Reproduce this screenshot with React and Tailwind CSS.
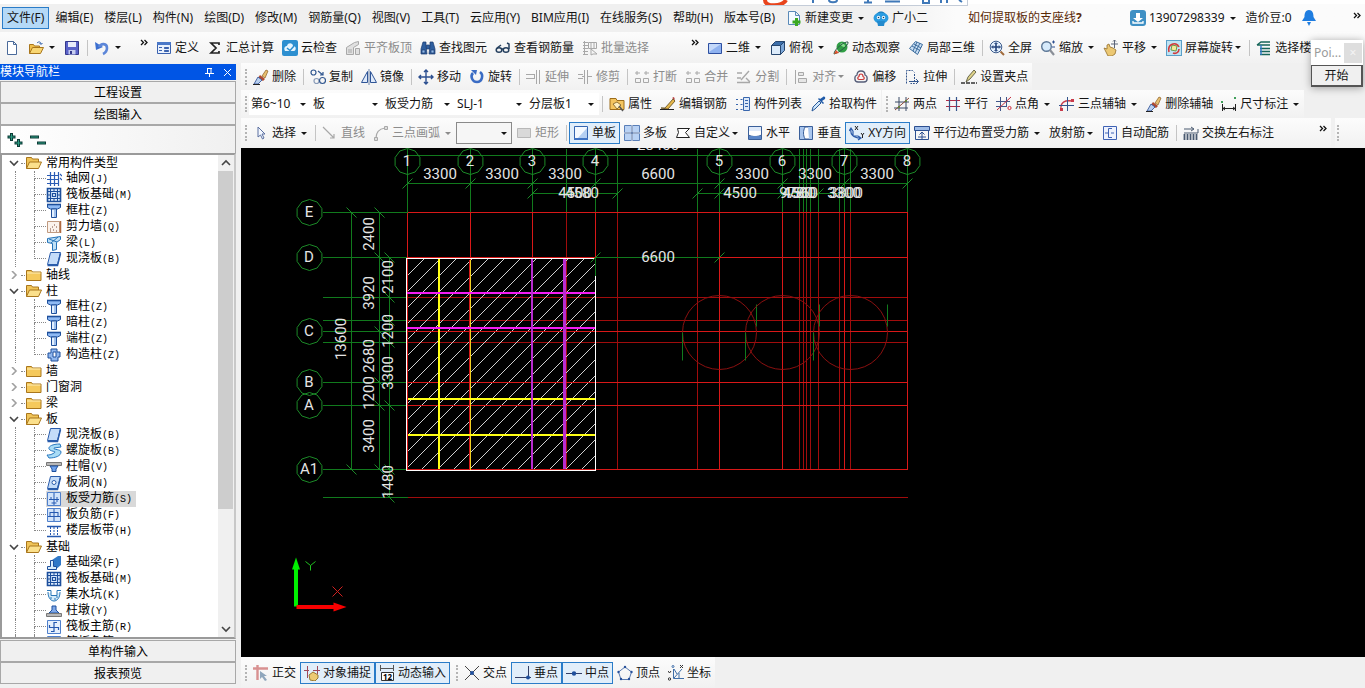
import React, { useState } from 'react'
import clsx from 'clsx'

const BLUE = '#2f5fa8'
const GREY = '#a8a8a8'

const star = (
  <g fill="none" stroke={GREY}>
    <path d="M1 4h5M10 4h5M3 2v4M12 2v4" />
    <path d="M1.5 9.5h5v4h-5zM9.5 9.5h5v4h-5z" />
  </g>
)

const brush = (
  <g>
    <path d="M9 7l4-6 2 1-3 7z" fill="#e8c070" stroke="#8a5a20" strokeWidth=".7" />
    <path d="M7 6l5 4-2 2-5-3z" fill="#b04a30" />
    <path d="M5 8l4 3-4 4H1z" fill="#b8d0f0" stroke="#2a4a90" strokeWidth=".8" />
    <path d="M0 15.5h7" stroke="#222" />
  </g>
)

const raft = (
  <g fill="none" stroke="#1d4f9c">
    <path d="M1.500 1.500h13v13h-13z" fill="#dcebfd" strokeWidth="1.600" />
    <path d="M4.500 4.500h7v7h-7zM6.500 6.500h3v3h-3z" strokeWidth="1.200" />
    <path d="M2 4.500h2M2 8h2M2 11.500h2M12 4.500h2M12 8h2M12 11.500h2M4.500 2v2M8 2v2M11.500 2v2M4.500 12v2M8 12v2M11.500 12v2" />
  </g>
)

const pillar = (
  <g stroke="#1d4f9c">
    <path d="M1.500 1.500h13v3l-3 1.500h-7l-3-1.500z" fill="#8fbaf4" />
    <path d="M1 1.500h14" strokeWidth="1.600" />
    <path d="M5.500 6h5v8.500h-5z" fill="#e3f0ff" />
    <path d="M9 7v7" stroke="#5d92dc" />
  </g>
)

const slab = (
  <g stroke="#2a5cab">
    <path d="M4.500 1.500h10l-3 12h-10z" fill="#c4dcf9" />
    <path d="M1.500 14.500h10l3-12" fill="none" strokeWidth="1.500" />
  </g>
)

const bar = (
  <g fill="none" stroke="#2458b0">
    <path d="M1.500 1.500h13v13h-13z" fill="#d2e4fb" stroke="#4f80cc" />
    <path d="M8 2v12M3 8.500h10M5 6v3M11 6v5M5.500 12h5" />
  </g>
)

const barTop = (
  <g fill="none" stroke="#2458b0">
    <path d="M1.500 1.500h13v13h-13z" fill="#d2e4fb" stroke="#4f80cc" />
    <path d="M8 2v12M4 5.500h8M4 5v5M12 5v5M2 9.500h12" />
  </g>
)

const barMain = (
  <g fill="none" stroke="#2458b0">
    <path d="M1.500 1.500h13v13h-13z" fill="#e6f0fd" stroke="#4f80cc" />
    <path d="M8 3v10M3 8.500h10M8 3.500h3M8 12.500H5M3.500 6v3M12.500 8v3" strokeWidth="1.200" />
  </g>
)

const ICONS = {
  file: <path d="M3.500 1.500h6l3 3v10h-9zM9.500 1.500v3h3" fill="#fff" stroke="#4a6a9a" />,
  open: (
    <g stroke="#a9761c">
      <path d="M1.500 13.500v-9h4l1 1.500h5v2" fill="#efbf4c" />
      <path d="M1.500 13.500l3-6h11l-3 6z" fill="#f8d673" />
      <path d="M9 3c2-2 4-1 4 1M11.500 3l1.500 1.500L14.500 3" fill="none" stroke={BLUE} />
    </g>
  ),
  save: (
    <g>
      <path d="M1.500 1.500h13v13h-13z" fill="#5a62c8" stroke="#34388c" />
      <path d="M4 2h8v5H4z" fill="#e8ebfa" />
      <path d="M4.500 10h7v4.500h-7z" fill="#c6cdf0" />
      <path d="M6 11h2v3H6z" fill="#34388c" />
    </g>
  ),
  undo: (
    <g>
      <path d="M1 2l1 8 7-3z" fill="#3b6fd0" />
      <path d="M5 7C7 3 13 3 13 8c0 3-2 5-4 6" fill="none" stroke="#5c86d8" strokeWidth="2.600" />
    </g>
  ),
  define: (
    <g>
      <path d="M1.500 2.500h13v11h-13z" fill="#e9f1fd" stroke="#3a62b0" />
      <path d="M1 2h14v3H1z" fill="#4a78c8" />
      <path d="M3 7.500h3M3 10.500h3M8.500 7.500h4v1h-4zM8.500 10.500h4v1h-4z" stroke="#3a62b0" />
    </g>
  ),
  sum: <path d="M12 5V3H4l5 5-5 5h8v-2" fill="none" stroke="#222" strokeWidth="1.700" />,
  cloudCheck: (
    <g>
      <rect width="16" height="16" rx="2" fill="#2d8fd0" />
      <path d="M3 11c-2-4 1-5 2-5 1-4 6-3 6 0 4 0 3 5 1 5z" fill="#e6f5ff" />
      <path d="M5 8l3 2.500L12 6" stroke="#2d8fd0" strokeWidth="1.500" fill="none" />
    </g>
  ),
  slabTop: (
    <g fill="#e0e0e0" stroke={GREY}>
      <path d="M1.500 7.500l8-5 4-1v3l-5 3v7h-7z" />
      <path d="M3 10h4M3 12h4M10.500 8.500h4v6h-4z" />
    </g>
  ),
  binocular: (
    <g fill="#2f5f9f" stroke="#1c3c70" strokeWidth=".7">
      <path d="M3 2h3v4l1 8H1V9zM10 2h3l2 7v5H9l1-8z" />
      <path d="M6.500 5h3v4h-3z" />
      <path d="M2 10h3v3H2zM11 10h3v3h-3z" fill="#8fb8e8" />
    </g>
  ),
  glasses: (
    <g fill="none" stroke="#26405f" strokeWidth="1.500">
      <ellipse cx="4" cy="10" rx="2.800" ry="2.300" />
      <ellipse cx="11" cy="10" rx="2.800" ry="2.300" />
      <path d="M6.500 9h2M2 8l4-3M14 9V4l-2-1" />
    </g>
  ),
  batch: <path d="M1 2.500h5M1 5.500h5M1 8.500h5M1 11.500h5M1 14.500h5M2.500 1v14M6.500 2.500h8v6h-8zM9 3v5M12 3v5M9 9l6 5h-4l-2 1z" fill="none" stroke={GREY} />,
  plane: (
    <g>
      <path d="M1.500 3.500h13v10h-13z" fill="#8fb2f0" stroke="#2d4fa0" />
      <path d="M2 4h12L2 12z" fill="#c3d8fa" />
    </g>
  ),
  cube: (
    <g stroke="#27466e">
      <path d="M1.500 5.500l4-4h9l-4 4z" fill="#3b6eaa" />
      <path d="M1.500 5.500h9v9h-9z" fill="#dcebfa" />
      <path d="M10.500 5.500l4-4v9l-4 4z" fill="#7ba6d8" />
    </g>
  ),
  orbit: (
    <g>
      <circle cx="9" cy="7" r="5.500" fill="#2f9e44" />
      <path d="M7 4c2-2 5 0 5 2s-3 1-5-2z" fill="#8be08f" />
      <path d="M1 14C1 9 12 1 15 2c1 3-9 11-14 12z" fill="none" stroke="#2b5a48" />
      <path d="M1 14l5-1-3-3z" fill="#e0522c" />
    </g>
  ),
  partial: (
    <g fill="#c8def4" stroke="#3d6d9d">
      <path d="M1.500 8.500l6-7 7 3-5 10z" />
      <path d="M4 6l7 4M9 2L5 11M12 3L7 13M6 4l7 4" fill="none" />
    </g>
  ),
  fit: (
    <g fill="none" stroke="#3d5c8c">
      <circle cx="7" cy="7" r="5.800" fill="#e6f2ff" />
      <path d="M7 3v8M3 7h8" stroke="#23427a" strokeWidth="1.600" />
      <path d="M5.500 4L7 2.500 8.500 4M5.500 10L7 11.500 8.500 10M4 5.500L2.500 7 4 8.500M10 5.500L11.500 7 10 8.500" stroke="#23427a" />
      <path d="M11.500 11.500l3.500 3.500" stroke="#a06a3a" strokeWidth="2" />
    </g>
  ),
  zoom: (
    <g fill="none" stroke="#5c7796">
      <circle cx="6.500" cy="6.500" r="4.800" fill="#d6eafb" strokeWidth="1.400" />
      <path d="M10 10l4 5" strokeWidth="2.200" stroke="#8a8f98" />
      <path d="M12 2h3M13.500 .5v3M12 7h3" stroke="#2c4f90" />
    </g>
  ),
  pan: (
    <g>
      <path d="M1 8l3 1V5l2-1 1 3 3 1 3 2-1 4-3 2H5z" fill="#ecc873" stroke="#94702c" strokeWidth=".8" />
      <path d="M11.500 0v8M8 4h7M10 1.500L11.500 0 13 1.500" fill="none" stroke="#5a6478" />
    </g>
  ),
  screenRotate: (
    <g>
      <rect x=".5" y=".5" width="15" height="15" fill="#bfe3f4" stroke="#5aa0c8" />
      <path d="M6 5l5 1-1 5-5-1z" fill="#f6e89a" stroke="#6a9a4a" />
      <path d="M3 12c-2-8 7-11 10-5M13 9c0 4-4 5-6 4" fill="none" stroke="#d23a3a" strokeWidth="1.600" />
    </g>
  ),
  floors: (
    <g fill="none" stroke="#17665a" strokeWidth="1.400">
      <path d="M1 5l4-3h9M1 5h13M4 8.500h10M4 11.500h10M4 14.500h10" />
      <path d="M5 5v10" stroke="#2f78c8" />
    </g>
  ),
  brush,
  copy: (
    <g fill="none" stroke="#30568f" strokeWidth="1.200">
      <circle cx="3.500" cy="3.500" r="2.500" />
      <circle cx="6.500" cy="12" r="2.500" stroke="#8a9cb8" />
      <circle cx="12.500" cy="11.500" r="3" />
      <path d="M8 2l5 4M13 3v3h-3" />
    </g>
  ),
  mirror: (
    <g fill="#dfeafa" stroke="#2f5596">
      <path d="M6.500 2.500v11h-6zM9.500 2.500v11h6z" />
      <path d="M8 0v16" stroke="#6f86ac" />
    </g>
  ),
  move: <path d="M8 1v14M1 8h14M6 3l2-2 2 2M6 13l2 2 2-2M3 6L1 8l2 2M13 6l2 2-2 2" fill="none" stroke="#2c4f90" strokeWidth="1.400" />,
  rotate: (
    <g fill="none" stroke="#3a6cc4" strokeWidth="2.600">
      <path d="M4 4C1 7 3 13 8 13s7-7 3-10" />
      <path d="M2 1l6 0-1 5z" fill="#3a6cc4" stroke="none" />
    </g>
  ),
  extend: <path d="M0 5.500h8M0 9.500h8M10.500 1v14M13.500 1v14M8.500 5v5" fill="none" stroke={GREY} />,
  trim: <path d="M1 5.500h5M1 9.500h5M10 7.500h5M7.500 1v14M10.500 1v14M5 7.500h3" fill="none" stroke={GREY} />,
  brk: star,
  merge: star,
  split: <path d="M1 4h5M1 13.500h13M1 9h4M13 2l-8 9M10 9l4 4" fill="none" stroke={GREY} strokeWidth="1.400" />,
  align: <path d="M2.500 1v14M5.500 3.500h5v3h-5zM5.500 9.500h8v4h-8z" fill="#e6e6e6" stroke={GREY} />,
  offset: (
    <g fill="none">
      <path d="M8 2c3 0 4 2 4 4 3 1 3 7-1 7H5c-4 0-4-6-1-7 0-2 1-4 4-4z" stroke="#555d78" strokeWidth="1.300" />
      <path d="M8 5c1.500 0 2 1 2 2.500 2 1 1.500 3-.5 3h-3c-2 0-2.500-2-.5-3C6 6 6.500 5 8 5z" stroke="#c93a3a" strokeWidth="1.200" />
    </g>
  ),
  stretch: (
    <g fill="none" stroke="#33558c">
      <path d="M2.500 14.500v-13h6l2 2M10.500 5v9.500h-4" strokeDasharray="2 1" />
      <path d="M5 12.500h9M12 10l2.500 2.500L12 15" />
    </g>
  ),
  grip: (
    <g>
      <path d="M0 14h16" stroke="#333" strokeWidth="1.500" strokeDasharray="4 1" />
      <path d="M5 13l2-5 6-7 2 2-6 7z" fill="#ded28a" stroke="#4a4a30" strokeWidth=".8" />
    </g>
  ),
  props: (
    <g>
      <path d="M1 2.500h6l1 2h7v9H1z" fill="#f4c560" stroke="#9c6c1a" />
      <path d="M4 8l4-2 4 3-4 4z" fill="#fff0c0" stroke="#7a5a20" strokeWidth=".8" />
      <path d="M10 10l4 5" stroke="#555" strokeWidth="1.500" />
    </g>
  ),
  editBar: (
    <g>
      <path d="M1 12h4l8-9 2 2-7 8z" fill="#e6b84c" stroke="#5c4618" strokeWidth=".8" />
      <path d="M0 13.500h14" stroke="#222" />
      <path d="M12 2l2-1 1 3z" fill="#b03030" />
    </g>
  ),
  list: (
    <g fill="none" stroke="#3866ad">
      <path d="M1 3.500h3M1 8.500h3M1 13.500h3M5.500 3.500h2M5.500 8.500h2M5.500 13.500h2" strokeDasharray="2 1" />
      <path d="M8.500 1.500h6v13h-6z" fill="#dce8f8" />
      <path d="M10 4.500h3M10 7.500h3M10 10.500h3" />
    </g>
  ),
  picker: (
    <g>
      <path d="M2 15l1-4 6-6 2 2-6 6z" fill="#cfe6fa" stroke="#2a5a9a" />
      <path d="M8 3l5 5 1-1-2-2 3-2c1-2-1-3-2-2l-3 2-1-1z" fill="#1f5aa8" />
    </g>
  ),
  twoPt: (
    <g fill="none" stroke="#333">
      <path d="M1 6h14M0 12h14M5 1v14M12 1v14" stroke="#3a4a66" />
      <path d="M1 14L15 2" stroke="#8a4a3a" />
      <circle cx="5" cy="11" r="1" fill="#5a8a2a" stroke="none" />
      <circle cx="12" cy="5" r="1" fill="#5a8a2a" stroke="none" />
    </g>
  ),
  parallel: (
    <g fill="none">
      <path d="M1 4.500h14M1 10.500h14" stroke="#b02c48" strokeWidth="1.200" />
      <path d="M4.500 1v14M11.500 1v14" stroke="#35558c" strokeWidth="1.200" />
    </g>
  ),
  angle: (
    <g fill="none">
      <path d="M0 5.500h14M0 10.500h11M4.500 1v14M10.500 1v9" stroke="#41588a" />
      <path d="M1 14L15 1" stroke="#c42c3c" />
      <circle cx="13.500" cy="12" r="1.600" stroke="#d02c3c" />
    </g>
  ),
  threePt: (
    <g fill="none">
      <path d="M2 14C1 6 6 4 13 5" stroke="#c93a4a" strokeWidth="1.300" />
      <path d="M8.500 1v14M0 9.500h15" stroke="#35558c" />
      <path d="M1 12h3v3H1zM12 3h3v3h-3z" fill="#c93a4a" />
    </g>
  ),
  dim: (
    <g fill="none">
      <path d="M1.500 8v7M14.500 8v7M2 12.500h12M4 11l-2 1.500L4 14M12 11l2 1.500-2 1.500" stroke="#222" />
      <path d="M0 5h2v2H0zM13 1h2v2h-2z" fill="#3f9f5a" />
    </g>
  ),
  cursor: <path d="M5 2v10l2.500-2 2 4 1.500-1-2-4h3z" fill="#f4f8ff" stroke="#5a6fa0" />,
  line: <path d="M1 2l11 11M12 9v4H8" fill="none" stroke={GREY} strokeWidth="1.200" />,
  arc: (
    <g fill="none" stroke={GREY}>
      <path d="M3 13C3 7 6 4 12 3" strokeWidth="1.200" />
      <path d="M1.500 12.500h3v3h-3zM11.500 1.500h3v3h-3z" fill="#ddd" />
    </g>
  ),
  rect: <path d="M1.500 3.500h13v9h-13z" fill="#d9d9d9" stroke="#b8b8b8" />,
  single: (
    <g>
      <path d="M1.500 1.500h13v13h-13z" fill="#f4f9ff" stroke="#3565b0" />
      <path d="M14 3v11H4z" fill="#b4cff2" />
      <path d="M1 13h14v2H1z" fill="#3f73c4" />
    </g>
  ),
  multi: (
    <g>
      <path d="M.5.5h15v15H.5z" fill="#b9d2f4" stroke="#5a7fb8" />
      <path d="M8 0v16M0 8h16" stroke="#fff" strokeWidth="2" />
      <path d="M8 0v16M0 8h16" stroke="#3a5f9a" />
    </g>
  ),
  custom: <path d="M1.500 12.500l2-5-1-4h12l-4 4 4 5z" fill="#fff" stroke="#222" />,
  horizontal: (
    <g>
      <path d="M1.500 1.500h13v13h-13z" fill="#dfeafa" stroke="#3a5f9a" />
      <path d="M1.500 6v4c4 2 9 2 13 0V6" fill="#fff" stroke="#3a5f9a" />
      <path d="M2 11h12v3H2z" fill="#5a86c8" />
    </g>
  ),
  vertical: (
    <g>
      <path d="M1.500 1.500h13v13h-13z" fill="#a9c6ee" stroke="#3a5f9a" />
      <path d="M10 2H7c-2 4-2 8 0 12h4" fill="#fff" stroke="#3a5f9a" />
    </g>
  ),
  xy: (
    <g fill="none" stroke="#2c5aa8" strokeWidth="1.200">
      <path d="M2 4c-1 5 2 9 9 9M4 6v5h5M9 11l3 2-3 2M0 6l2-3 2 3" />
      <path d="M6 1l3 4M9 1L6 5M12 8l1.500 2L15 8M13.500 10v3" stroke="#222" strokeWidth="1" />
    </g>
  ),
  edgeBar: (
    <g fill="none" stroke="#2c4f90">
      <path d="M.5 1.500h15v4H.5z" fill="#9ebce8" />
      <path d="M1.500 6v8.500h13V6M8 14V7M5.500 9.500L8 7l2.500 2.500M4 12h8" />
    </g>
  ),
  auto: (
    <g fill="none" stroke="#3f62b4">
      <path d="M1.500 1.500h13v13h-13z" fill="#eef2fd" />
      <path d="M10 3.500H6.500v9H10M3 8h3.500M9 8h3" />
    </g>
  ),
  swap: (
    <g fill="none" stroke="#4a5a70">
      <path d="M1 4h9M8 2l3 2-3 2M15 4v4H1" />
      <path d="M1.500 9v6M4.500 9v6M7.500 9v6M10.500 9v6M13.500 9v6" strokeWidth="1.800" />
    </g>
  ),
  ortho: (
    <g fill="none">
      <path d="M0 3.500h15M4.500 0v15" stroke="#d89090" strokeWidth="2.400" />
      <path d="M7 6v8l2-2 3 4 2-1-3-4h3z" fill="#8fa6bc" />
    </g>
  ),
  snap: (
    <g fill="none">
      <path d="M0 5.500h5M3.500 1v12M13.500 1v8M9 5.500h7" stroke="#a04858" />
      <path d="M6 15l-1-5 4-3 5 3v3l-3 3z" fill="#ecca72" stroke="#9a7a30" />
    </g>
  ),
  dyn: (
    <g>
      <path d="M1.500 0v6M14.500 0v6M2 3.500h12" stroke="#555" />
      <path d="M2.500 7.500h12v8h-12z" fill="#fff" stroke="#333" />
      <text x="4" y="14.500" fontSize="8" fontWeight="bold">12</text>
    </g>
  ),
  cross: (
    <g>
      <path d="M1 1l14 14M15 1L1 15" stroke="#444" />
      <circle cx="8" cy="8" r="2" fill="#1f4f9c" />
    </g>
  ),
  perp: (
    <g>
      <path d="M13.500 1v11M0 12.500h16" stroke="#333f66" />
      <circle cx="13" cy="12.500" r="2" fill="#1f4f9c" />
    </g>
  ),
  mid: (
    <g>
      <path d="M0 8.500h16" stroke="#333f66" />
      <circle cx="8" cy="8.500" r="2.200" fill="#1f4f9c" />
    </g>
  ),
  vertex: (
    <g fill="#27509a">
      <path d="M8 2l6.500 5-2.500 7.500H4L1.500 7z" fill="none" stroke="#5a7ab0" />
      <circle cx="8" cy="2" r="1.200" /><circle cx="14.500" cy="7" r="1.200" /><circle cx="12" cy="14" r="1.200" /><circle cx="4" cy="14" r="1.200" /><circle cx="1.500" cy="7" r="1.200" />
    </g>
  ),
  coord: (
    <g fill="none" stroke="#3f6ea8">
      <path d="M5.500 4v9.500H16M6 13l8-9M6 4l3 5M11 8v5" />
      <path d="M0 6l1.500 2L3 6M12 0l3 3M15 0l-3 3" stroke="#333" />
      <circle cx="5" cy="1.500" r="1" /><circle cx="1.500" cy="14" r="1.200" stroke="#333" />
    </g>
  ),
  change: (
    <g>
      <path d="M2.500 1.500h7l4 4v9h-11zM9.500 1.500v4h4" fill="#f4faff" stroke="#5a8ab8" />
      <path d="M10.500 8v8M6.500 12h8" stroke="#3aa820" strokeWidth="3" />
    </g>
  ),
  robot: (
    <g>
      <path d="M3 6C3 0 13 0 13 6z" fill="#1679b8" />
      <ellipse cx="8" cy="8" rx="7.500" ry="5.500" fill="#2a9be0" />
      <path d="M4 11h8l-1 5H5z" fill="#2389cc" />
      <circle cx="5.500" cy="7.500" r="1.700" fill="#fff" /><circle cx="10.500" cy="7.500" r="1.700" fill="#fff" />
      <circle cx="5.500" cy="7.500" r=".8" fill="#0d3f66" /><circle cx="10.500" cy="7.500" r=".8" fill="#0d3f66" />
    </g>
  ),
  user: (
    <g>
      <rect width="16" height="16" rx="3" fill="#3f90c4" />
      <path d="M6 3h4v5h3l-5 4-5-4h3z" fill="#fff" />
      <path d="M3 11v2h10v-2" fill="none" stroke="#fff" strokeWidth="1.300" />
    </g>
  ),
  bell: <path d="M8 0c4 0 4.500 4 4.500 7l2.500 4H1l2.500-4C3.500 4 4 0 8 0zM6 12h4l-2 4z" fill="#1f7de0" />,
  folder: (
    <g stroke="#a9761c">
      <path d="M.5 3.500h5l1 1.500h8.500v8.500H.5z" fill="#f5c95c" />
      <path d="M1 6h13.500" stroke="#fdeeb8" />
    </g>
  ),
  folderOpen: (
    <g stroke="#a9761c">
      <path d="M.5 13.500v-11h5l1 1.500h6v3" fill="#f0c458" />
      <path d="M.5 13.500l3-6.500h12l-3 6.500z" fill="#fbe08c" />
    </g>
  ),
  axisNet: <path d="M1 4.500h12M1 8.500h12M1 12.500h12M4.500 1v14M8.500 1v14M12.500 1v14M14 3l2 2M14 7l2 2" fill="none" stroke="#2b5cb4" strokeWidth="1.200" />,
  raft,
  pillar,
  wall: (
    <g>
      <path d="M1.500 2.500h12v11h-12z" fill="#fbf3ec" stroke="#c09a80" />
      <path d="M4 10h1M7 11h1M10 8h1M4 12h1M8 6h1M10 12h1M6 8h1" stroke="#7a4a3a" />
      <path d="M14.500 2v12" stroke="#b06a40" strokeWidth="1.500" />
    </g>
  ),
  beam: (
    <g stroke="#2372b8">
      <path d="M1.500 3.500l13-2v3l-4 3v7l-4 1v-7l-5-1z" fill="#bfe0f6" />
      <path d="M3 4l8 3M12 2L5 8" />
    </g>
  ),
  slab,
  tie: (
    <g stroke="#1d4f9c">
      <path d="M5 2h6v3h3v5h-2v4H5v-3H2V6h3z" fill="#8fb6ee" />
      <path d="M7 5h3v5H7z" fill="#fff" />
    </g>
  ),
  spiral: <path d="M14 1C4 1 1 5 4 7s7 1 4 3-5 2-7 2l2 3c6 0 12-2 12-6 0-3-8-2-7-4l7-1z" fill="#a8dcf6" stroke="#2878c0" />,
  cap: (
    <g>
      <path d="M.5 3.500h15v3H.5z" fill="#b8b8b8" stroke="#777" />
      <path d="M4 7h8l-2 3v2.500H6V10z" fill="#6fa2ec" stroke="#1d4f9c" />
    </g>
  ),
  hole: (
    <g>
      {slab}
      <circle cx="8" cy="7.500" r="2" fill="#fff" stroke="#2a5cab" />
    </g>
  ),
  bar,
  barTop,
  barMain,
  strip: (
    <g fill="none" stroke="#2458b0">
      <path d="M1 3.500h14M1 13.500h14" strokeWidth="1.400" />
      <path d="M4.500 4v9M11.500 4v9M8 4v9" strokeDasharray="2 1" />
    </g>
  ),
  footBeam: (
    <g>
      <path d="M6 5l6-4h3v9l-6 5z" fill="#2f78c8" />
      <path d="M1.500 14.500v-3h3v-6h3v6h3v3z" fill="#d8ecfc" stroke="#1d4f9c" />
    </g>
  ),
  pit: (
    <g fill="none" stroke="#2b78b8">
      <path d="M2 6c0 11 12 11 12 0h-3v3H5V6z" fill="#d4ebfa" stroke="none" />
      <path d="M1 3.500h4v5h6v-5h4M2 5c0 12 12 12 12 0M4 11h2M8 12h2M10 10h2" />
    </g>
  ),
  pier: (
    <g>
      <path d="M6 3h4v4l3 3H3l3-3z" fill="#7fa8e8" stroke="#1d4f9c" />
      <path d="M.5 10.500h15v3H.5z" fill="#b8b8b8" stroke="#777" />
    </g>
  )
}

function Icon({ name }) {
  return (
    <svg className="h-4 w-4 shrink-0" viewBox="0 0 16 16" aria-hidden="true">
      {ICONS[name]}
    </svg>
  )
}

function Arrow({ tight }) {
  return (
    <svg className={clsx('h-[5px] w-[9px] shrink-0', tight && '-ml-[3px]')} viewBox="0 0 9 5" fill="currentColor" aria-hidden="true">
      <path d="M2 1h6L5 4z" />
    </svg>
  )
}

function Tool({ icon, label, title, arrow, tight, on, off }) {
  return (
    <button
      type="button"
      disabled={off}
      title={title}
      className={clsx(
        'flex h-[22px] shrink-0 items-center gap-[3px] px-1 whitespace-nowrap',
        on && 'bg-[#e1eefa] ring-1 ring-[#2a7cc8] ring-inset',
        off ? 'text-[#8c8c8c]' : 'text-[#151515]'
      )}
    >
      {icon && <Icon name={icon} />}
      {label && <span>{label}</span>}
      {(arrow || tight) && <Arrow tight={tight} />}
    </button>
  )
}

function Sep() {
  return <span className="mr-[2px] ml-[3px] h-4 w-px shrink-0 bg-[#c4c4c4]" />
}

function Grip() {
  return <span className="mx-[2px] h-4 shrink-0 border-l-2 border-dotted border-[#b4b4b4]" />
}

function More() {
  return (
    <button type="button" aria-label="更多" className="flex h-4 items-center px-1">
      <svg className="h-[7px] w-2" viewBox="0 0 8 7" fill="none" stroke="#111" strokeWidth="1.300">
        <path d="M1 1l2.500 2.500L1 6M4.500 1L7 3.500 4.500 6" />
      </svg>
    </button>
  )
}

function Bar({ className, children }) {
  return <div className={clsx('flex items-center bg-linear-to-b from-[#fcfcfc] to-[#f1f1f1]', className)}>{children}</div>
}

// items: object = tool, '|' = separator
function Tools({ items }) {
  return items.map((it, i) => (it === '|' ? <Sep key={i} /> : <Tool key={i} {...it} />))
}

function Combo({ label, value, small, framed }) {
  return (
    <div className={clsx('relative shrink-0', small ? 'w-[62px]' : framed ? 'w-14' : 'w-[72px]')}>
      <select
        aria-label={label}
        defaultValue={value}
        className={clsx('block h-[22px] w-full appearance-none pr-5 pl-[2px]', framed ? 'border border-[#8a8a8a] bg-[#f6f6f6]' : 'bg-white')}
      >
        <option>{value}</option>
      </select>
      <span className="pointer-events-none absolute inset-y-0 right-1 flex items-center">
        <Arrow />
      </span>
    </div>
  )
}

const MENU = ['文件(F)', '编辑(E)', '楼层(L)', '构件(N)', '绘图(D)', '修改(M)', '钢筋量(Q)', '视图(V)', '工具(T)', '云应用(Y)', 'BIM应用(I)', '在线服务(S)', '帮助(H)', '版本号(B)']

const QUICK = [
  { icon: 'define', label: '定义' },
  { icon: 'sum', label: '汇总计算' },
  { icon: 'cloudCheck', label: '云检查' },
  { icon: 'slabTop', label: '平齐板顶', off: true },
  { icon: 'binocular', label: '查找图元' },
  { icon: 'glasses', label: '查看钢筋量' },
  { icon: 'batch', label: '批量选择', off: true }
]

const VIEW = [
  { icon: 'plane', label: '二维', arrow: true },
  { icon: 'cube', label: '俯视', arrow: true },
  { icon: 'orbit', label: '动态观察' },
  { icon: 'partial', label: '局部三维' },
  '|',
  { icon: 'fit', label: '全屏' },
  { icon: 'zoom', label: '缩放', arrow: true },
  { icon: 'pan', label: '平移', arrow: true },
  { icon: 'screenRotate', label: '屏幕旋转', tight: true },
  '|',
  { icon: 'floors', label: '选择楼层' }
]

const EDIT = [
  { icon: 'brush', label: '删除' },
  '|',
  { icon: 'copy', label: '复制' },
  { icon: 'mirror', label: '镜像' },
  '|',
  { icon: 'move', label: '移动' },
  { icon: 'rotate', label: '旋转' },
  '|',
  { icon: 'extend', label: '延伸', off: true },
  { icon: 'trim', label: '修剪', off: true },
  '|',
  { icon: 'brk', label: '打断', off: true },
  { icon: 'merge', label: '合并', off: true },
  { icon: 'split', label: '分割', off: true },
  '|',
  { icon: 'align', label: '对齐', tight: true, off: true },
  { icon: 'offset', label: '偏移' },
  { icon: 'stretch', label: '拉伸' },
  '|',
  { icon: 'grip', label: '设置夹点' }
]

const COMPONENT = [
  '|',
  { icon: 'props', label: '属性' },
  { icon: 'editBar', label: '编辑钢筋' },
  { icon: 'list', label: '构件列表' },
  { icon: 'picker', label: '拾取构件' }
]

const AXIS = [
  { icon: 'twoPt', label: '两点' },
  { icon: 'parallel', label: '平行' },
  { icon: 'angle', label: '点角', arrow: true },
  { icon: 'threePt', label: '三点辅轴', arrow: true },
  { icon: 'brush', label: '删除辅轴' },
  { icon: 'dim', label: '尺寸标注', arrow: true }
]

const DRAW = [
  { icon: 'cursor', label: '选择', arrow: true },
  '|',
  { icon: 'line', label: '直线', off: true },
  { icon: 'arc', label: '三点画弧', arrow: true, off: true }
]

const PLACE = [
  { icon: 'rect', label: '矩形', off: true },
  '|',
  { icon: 'single', label: '单板', on: true },
  { icon: 'multi', label: '多板' },
  { icon: 'custom', label: '自定义', tight: true },
  { icon: 'horizontal', label: '水平' },
  { icon: 'vertical', label: '垂直' },
  { icon: 'xy', label: 'XY方向', on: true },
  { icon: 'edgeBar', label: '平行边布置受力筋', arrow: true },
  { label: '放射筋', tight: true },
  { icon: 'auto', label: '自动配筋' },
  '|',
  { icon: 'swap', label: '交换左右标注' }
]

const INPUT_MODES = [
  { icon: 'ortho', label: '正交' },
  { icon: 'snap', label: '对象捕捉', on: true },
  { icon: 'dyn', label: '动态输入', on: true }
]

const SNAPS = [
  { icon: 'cross', label: '交点' },
  { icon: 'perp', label: '垂点', on: true },
  { icon: 'mid', label: '中点', on: true },
  { icon: 'vertex', label: '顶点' },
  { icon: 'coord', label: '坐标' }
]

const TREE = [
  { name: '常用构件类型', items: [['axisNet', '轴网', 'J'], ['raft', '筏板基础', 'M'], ['pillar', '框柱', 'Z'], ['wall', '剪力墙', 'Q'], ['beam', '梁', 'L'], ['slab', '现浇板', 'B']] },
  { name: '轴线' },
  { name: '柱', items: [['pillar', '框柱', 'Z'], ['pillar', '暗柱', 'Z'], ['pillar', '端柱', 'Z'], ['tie', '构造柱', 'Z']] },
  { name: '墙' },
  { name: '门窗洞' },
  { name: '梁' },
  { name: '板', items: [['slab', '现浇板', 'B'], ['spiral', '螺旋板', 'B'], ['cap', '柱帽', 'V'], ['hole', '板洞', 'N'], ['bar', '板受力筋', 'S'], ['barTop', '板负筋', 'F'], ['strip', '楼层板带', 'H']] },
  { name: '基础', items: [['footBeam', '基础梁', 'F'], ['raft', '筏板基础', 'M'], ['pit', '集水坑', 'K'], ['pier', '柱墩', 'Y'], ['barMain', '筏板主筋', 'R'], ['barTop', '筏板负筋', 'X']] }
]

function Chevron({ dir }) {
  const paths = { up: 'M1 6l4-4 4 4', down: 'M1 2l4 4 4-4', right: 'M3 0l4 4-4 4' }
  return (
    <svg className="h-2 w-[10px] shrink-0" viewBox="0 0 10 8" fill="none" aria-hidden="true">
      <path d={paths[dir]} stroke={dir === 'right' ? '#a0a0a0' : '#444'} strokeWidth="1.600" />
    </svg>
  )
}

function TreeGroup({ group, selected, onSelect }) {
  const items = group.items || []
  return (
    <li>
      <div className="flex h-4 items-center pl-[7px]">
        <Chevron dir={items.length ? 'down' : 'right'} />
        <span className="mr-px ml-[2px] w-1 border-t border-dotted border-[#888]" />
        <Icon name={items.length ? 'folderOpen' : 'folder'} />
        <span className="ml-1">{group.name}</span>
      </div>
      <ul>
        {items.map(([icon, name, key], i) => (
          <li key={name} className="flex h-4 items-center pl-[13px]">
            <span className="h-4 w-[19px] shrink-0 border-l border-dotted border-[#888]" />
            <span className="h-4 w-3 shrink-0">
              <span className="block h-2 border-b border-l border-dotted border-[#888]" />
              {i < items.length - 1 && <span className="block h-2 border-l border-dotted border-[#888]" />}
            </span>
            <button
              type="button"
              onClick={() => onSelect(name)}
              className={clsx('flex h-4 items-center gap-1 pr-1 whitespace-nowrap', selected === name && 'bg-[#d9d9d9]')}
            >
              <Icon name={icon} />
              <span>
                {name}
                <span className="font-['Liberation_Mono'] text-[10px]">({key})</span>
              </span>
            </button>
          </li>
        ))}
      </ul>
    </li>
  )
}

function Sidebar() {
  const [selected, setSelected] = useState('板受力筋')
  const section = 'h-[22px] w-full border border-[#a8a8a8] bg-[#f0f0f0] pt-px leading-5'

  return (
    <aside className="flex w-[236px] shrink-0 flex-col bg-[#f0f0f0] pt-px pb-1 text-black">
      <div className="flex h-4 shrink-0 items-center bg-[#0055e5] text-white">
        <span className="flex-1">模块导航栏</span>
        <button type="button" aria-label="固定" className="mr-[9px]">
          <svg className="h-[9px] w-[9px]" viewBox="0 0 9 9" fill="none" stroke="white">
            <path d="M2.500 0v5M6 0v5M2 .5h5M0 5.500h9M4.500 5v4" />
          </svg>
        </button>
        <button type="button" aria-label="关闭" className="mr-1">
          <svg className="h-[9px] w-[9px]" viewBox="0 0 9 9" stroke="white">
            <path d="M1 1l7 7M8 1L1 8" />
          </svg>
        </button>
      </div>
      <div className="flex shrink-0 flex-col pt-px">
        <button type="button" className={section}>工程设置</button>
        <button type="button" className={section}>绘图输入</button>
      </div>
      <div className="flex h-7 shrink-0 items-center gap-[7px] border-x border-t border-[#a8a8a8] bg-linear-to-r from-white to-[#f0f0f0] pl-[6px]">
        <button type="button" aria-label="全部展开">
          <svg className="h-4 w-4" viewBox="0 0 16 16" stroke="#0d3b36" strokeWidth="3">
            <path d="M4.500 1v8M.5 5h8M11.500 7v8M7.500 11h8" />
            <path d="M4.500 2v6M1.500 5h6M11.500 8v6M8.500 11h6" stroke="#2a9a80" strokeWidth="1" />
          </svg>
        </button>
        <button type="button" aria-label="全部折叠">
          <svg className="h-4 w-4" viewBox="0 0 16 16" stroke="#0d3b36" strokeWidth="3">
            <path d="M0 5h9M7 11h9" />
            <path d="M1 5h7M8 11h7" stroke="#2a9a80" strokeWidth="1" />
          </svg>
        </button>
      </div>
      <div className="flex min-h-0 flex-1 border-2 border-[#9a9a9a] border-r-[#c8c8c8] bg-white">
        <ul className="min-w-0 flex-1 overflow-hidden leading-4">
          {TREE.map((g) => (
            <TreeGroup key={g.name} group={g} selected={selected} onSelect={setSelected} />
          ))}
        </ul>
        <div className="flex w-4 flex-col bg-[#f0f0f0]">
          <button type="button" aria-label="向上滚动" className="flex h-4 items-center justify-center"><Chevron dir="up" /></button>
          <div className="flex-1">
            <div className="h-3/4 w-[15px] bg-[#cdcdcd]" />
          </div>
          <button type="button" aria-label="向下滚动" className="flex h-4 items-center justify-center"><Chevron dir="down" /></button>
        </div>
      </div>
      <div className="flex shrink-0 flex-col pt-px">
        <button type="button" className={section}>单构件输入</button>
        <button type="button" className={section}>报表预览</button>
      </div>
    </aside>
  )
}

const AXES_X = [[407, '1'], [470, '2'], [532, '3'], [595, '4'], [719, '5'], [782, '6'], [844, '7'], [907, '8']]
const AXES_Y = [[212, 'E'], [257, 'D'], [331, 'C'], [382, 'B'], [405, 'A'], [469, 'A1']]
const AUX_X = [566, 617, 697, 799, 803, 806, 810, 818, 839, 850]
const AUX_Y = [297, 320, 342, 497]
const DIMS_X = [[440, 174, '3300'], [502, 174, '3300'], [565, 174, '3300'], [658, 174, '6600'], [752, 174, '3300'], [815, 174, '3300'], [877, 174, '3300'], [575, 193, '4500'], [582, 193, '4580'], [740, 193, '4500'], [796, 193, '9780'], [801, 193, '1560'], [799, 193, '4500'], [844, 193, '3300'], [846, 193, '3800'], [658, 257, '6600'], [658, 145, '28400']]
const DIMS_Y = [[369, 234, '2400'], [388, 277, '2100'], [369, 293, '3920'], [388, 331, '1200'], [341, 339, '13600'], [369, 356, '2680'], [388, 373, '3300'], [369, 393, '1200'], [369, 436, '3400'], [388, 482, '1480']]
const TICKS = [[407, 183], [470, 183], [532, 183], [595, 183], [719, 183], [782, 183], [844, 183], [907, 183], [532, 193], [617, 193], [697, 193], [719, 193], [782, 193], [818, 193], [595, 257], [719, 257]]
const TICKS_LEFT = [[351, 212], [351, 469], [379, 212], [379, 257], [379, 331], [379, 382], [379, 405], [379, 469], [389, 257], [389, 297], [389, 320], [389, 342], [389, 405], [389, 469], [389, 497]]
const RINGS = [719, 782, 850]

function bubblePoints(cx, cy) {
  return Array.from({ length: 10 }, (_, i) => {
    const a = (Math.PI / 5) * i - Math.PI / 2
    return `${(cx + 13 * Math.cos(a)).toFixed(1)},${(cy + 13 * Math.sin(a)).toFixed(1)}`
  }).join(' ')
}

// drawing units are window pixels, shifted so that the canvas corner is 241,148
function Drawing() {
  const hatch = []
  for (let s = 682; s < 1065; s += 16) {
    const x1 = Math.max(407, s - 469)
    const x2 = Math.min(595, s - 258)
    hatch.push(`M${x1} ${s - x1}L${x2} ${s - x2}`)
  }

  return (
    <svg className="block h-full w-full" role="img" aria-label="绘图区">
      <g transform="translate(-240.500 -147.500)" fill="none" shapeRendering="crispEdges">
        <g stroke="#117a1d">
          {AUX_X.map((x) => <path key={x} d={`M${x} 148V212`} />)}
          {AXES_X.map(([x]) => <path key={x} d={`M${x} 148V212`} />)}
          {AXES_Y.map(([y]) => <path key={y} d={`M322 ${y}H407`} />)}
          {AUX_Y.map((y) => <path key={y} d={`M322 ${y}H407`} />)}
          <path d="M407 155H907M407 183H907M532 193H617M697 193H850M351 212V469M379 212V469M389 257V497" />
        </g>
        <g stroke="#a00c0c">
          {AUX_X.map((x) => <path key={x} d={`M${x} 212V469`} />)}
          {AUX_Y.map((y) => <path key={y} d={`M407 ${y}H907`} />)}
        </g>
        <path d={hatch.join('')} stroke="#cfcfcf" />
        <g stroke="#d81818">
          {AXES_X.map(([x]) => <path key={x} d={`M${x} 212V469`} />)}
          {AXES_Y.map(([y]) => <path key={y} d={`M407 ${y}H907`} />)}
        </g>
        <path d="M406 258H595V470H406z" stroke="#fff" />
        <path d="M595 257H719M595 257V275" stroke="#117a1d" />
        <path d="M470 259V469" stroke="#f0d020" />
        <path d="M469 259V469" stroke="#d81818" />
      </g>
      <g transform="translate(-241 -148)" fill="none" shapeRendering="crispEdges" strokeWidth="2">
        <path d="M439 259V469M408 399H595M408 435H595" stroke="#ffff14" />
        <path d="M407 293H595M407 328H595" stroke="#f41cf4" />
        <path d="M532 259V469" stroke="#b82cd0" />
        <path d="M564 259V469" stroke="#b82cd0" strokeWidth="3" />
      </g>

      <g transform="translate(-240.500 -147.500)" fill="none">
        <g stroke="#1c8a28">
          {AXES_X.map(([x]) => <polygon key={x} points={bubblePoints(x, 161)} />)}
          {AXES_Y.map(([y]) => <polygon key={y} points={bubblePoints(309, y)} />)}
          {TICKS.map(([x, y]) => <path key={`${x}-${y}`} d={`M${x - 5} ${y + 5}l10-10`} />)}
          {TICKS_LEFT.map(([x, y]) => <path key={`${x}-${y}`} d={`M${x - 5} ${y - 5}l10 10`} />)}
        </g>
        {RINGS.map((x) => (
          <g key={x}>
            <circle cx={x} cy="332" r="37" stroke="#8a1010" />
            <path d={`M${x - 37} 332v28M${x + 37} 304v22`} stroke="#117a1d" />
          </g>
        ))}
        <path d="M295.500 606V568" stroke="#00f000" strokeWidth="4" />
        <path d="M291.500 569l4-12 4 12z" fill="#00f000" />
        <path d="M296 606.500h38" stroke="#f80000" strokeWidth="4" />
        <path d="M333 602l13 4.500-13 4.500z" fill="#f80000" />
        <path d="M305 561l5 4 5-4M310 565v5" stroke="#20c020" />
        <path d="M332 586l10 10M342 586l-10 10" stroke="#d02020" />
      </g>

      <g transform="translate(-241 -148)" fill="#e4e4e4" fontSize="15" fontFamily="Roboto, sans-serif" textAnchor="middle" dominantBaseline="central">
        {AXES_X.map(([x, t]) => <text key={x} x={x} y="161">{t}</text>)}
        {AXES_Y.map(([y, t]) => <text key={y} x="309" y={y}>{t}</text>)}
        {DIMS_X.map(([x, y, t]) => <text key={`${x}-${y}`} x={x} y={y}>{t}</text>)}
        {DIMS_Y.map(([x, y, t]) => <text key={`${x}-${y}`} transform={`translate(${x} ${y}) rotate(-90)`}>{t}</text>)}
      </g>
    </svg>
  )
}

function ImeStrip() {
  return (
    <div className="absolute top-0 left-[763px] h-[6px] w-[205px] overflow-hidden border-r border-b border-[#c4ccd8] bg-white" aria-hidden="true">
      <svg className="h-[6px] w-[205px]" viewBox="0 0 205 6" fill="none">
        <path d="M2 0c0 8 18 6 21 0" stroke="#e8441c" strokeWidth="4" />
        <path d="M50 0v3M66 0c0 3 8 3 8 0M105 0v2M101 2.500h8M122 1.500h15M160 0v3h6V0M178 0v3M184 0v3M196 0l3 2" stroke="#3f78b8" strokeWidth="2" />
      </svg>
    </div>
  )
}

function FloatingPanel() {
  return (
    <div className="absolute top-10 right-[2px] w-[52px] bg-white shadow-[0_1px_8px_rgba(0,0,0,0.35)]">
      <div className="flex h-[25px] items-center justify-between pr-px pl-[3px] text-[#9a9a9a]">
        <span>Poi...</span>
        <button type="button" aria-label="关闭" className="h-5 w-[18px] bg-[#dedede] text-[#f4f4f4]">×</button>
      </div>
      <button type="button" className="block h-[22px] w-full border border-r-2 border-b-2 border-[#555] bg-[#f0f0f0]">开始</button>
    </div>
  )
}

export default function App() {
  return (
    <div className="relative flex h-screen flex-col overflow-hidden bg-[#f0f0f0] font-['Noto_Sans','Noto_Sans_CJK_SC',sans-serif] text-xs text-[#151515]">
      <header className="shrink-0">
        <div className="flex h-8 items-center border-t-4 border-white bg-linear-to-r from-[#f0f0f0] from-65% to-[#fbfbfb] to-70%">
          <nav className="mr-[2px] flex items-center gap-px pl-[2px]">
            {MENU.map((m, i) => (
              <button
                key={m}
                type="button"
                className={clsx('h-[22px] px-[5px] whitespace-nowrap', i === 0 && 'bg-[#b5d9f7] ring-1 ring-[#2a7cc8] ring-inset')}
              >
                {m}
              </button>
            ))}
          </nav>
          <Tool icon="change" label="新建变更" arrow />
          <Tool icon="robot" label="广小二" />
          <a href="#help" className="ml-9 whitespace-nowrap text-[#5a2a08]">如何提取板的支座线<b>?</b></a>
          <div className="ml-auto flex w-[239px] items-center gap-px">
            <Tool icon="user" label="13907298339" arrow />
            <Tool label="造价豆:0" />
            <Tool icon="bell" title="消息" />
            <span className="ml-auto self-start"><More /></span>
          </div>
        </div>
        <div className="flex h-[31px]">
          <Bar className="w-[152px] shrink-0">
            <Tool icon="file" title="新建" />
            <Tool icon="open" title="打开" arrow />
            <Tool icon="save" title="保存" />
            <Sep />
            <Tool icon="undo" title="撤销" arrow />
            <span className="ml-auto self-start pt-[2px]"><More /></span>
          </Bar>
          <Bar className="w-[551px] shrink-0">
            <Tools items={QUICK} />
            <span className="ml-auto self-start pt-[2px]"><More /></span>
          </Bar>
          <Bar className="min-w-0 flex-1 overflow-hidden">
            <Tools items={VIEW} />
          </Bar>
        </div>
      </header>

      <div className="flex min-h-0 flex-1">
        <Sidebar />
        <main className="ml-[5px] flex min-w-0 flex-1 flex-col">
          <div className="flex h-[27px] shrink-0">
            <Bar className="pl-[2px]">
              <Grip />
              <Tools items={EDIT} />
            </Bar>
          </div>
          <div className="flex h-7 shrink-0 gap-px">
            <Bar className="pl-[2px]">
              <Grip />
              <Combo label="楼层" value="第6~10层" small />
              <Combo label="构件类别" value="板" />
              <Combo label="构件类型" value="板受力筋" />
              <Combo label="构件" value="SLJ-1" />
              <Combo label="分层" value="分层板1" />
              <Tools items={COMPONENT} />
            </Bar>
            <Bar className="pl-[2px]">
              <Grip />
              <Tools items={AXIS} />
            </Bar>
          </div>
          <div className="flex h-[30px] shrink-0 gap-1">
            <Bar className="flex-1 pl-[2px]">
              <Grip />
              <Tools items={DRAW} />
              <Combo label="绘制方式" value="" framed />
              <Tools items={PLACE} />
              <span className="ml-auto self-start pt-[2px]"><More /></span>
            </Bar>
            <Bar className="w-[30px]">
              <Grip />
            </Bar>
          </div>
          <div className="min-h-0 flex-1 bg-black">
            <Drawing />
          </div>
          <div className="flex h-[31px] shrink-0">
            <Bar className="pl-[2px]">
              <Grip />
              <Tools items={INPUT_MODES} />
              <span className="ml-1 flex"><Grip /></span>
              <Tools items={SNAPS} />
            </Bar>
          </div>
        </main>
      </div>

      <ImeStrip />
      <FloatingPanel />
    </div>
  )
}
